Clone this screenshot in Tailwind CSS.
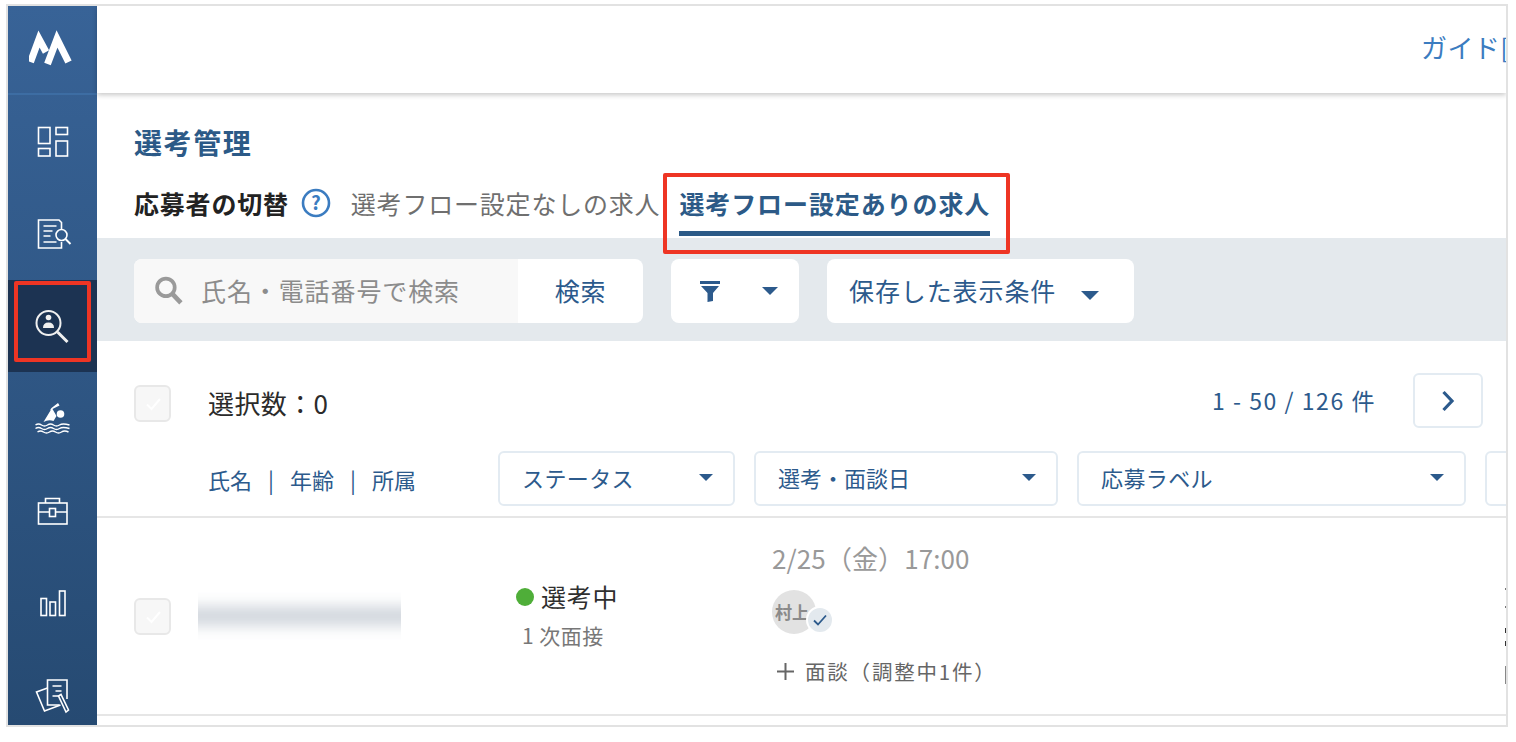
<!DOCTYPE html>
<html lang="ja">
<head>
    <meta charset="UTF-8">
    <meta name="viewport" content="width=device-width, initial-scale=1.0">
    <title>選考管理</title>
    <script src="https://cdn.jsdelivr.net/npm/@tailwindcss/browser@4"></script>
</head>
<body class="bg-white h-[742px] overflow-hidden font-['Noto_Sans_CJK_JP','Noto_Sans',sans-serif]">
    <!-- Frame -->
    <div class="relative ml-[6px] mt-[4px] w-[1502px] h-[723px] border-2 border-[#e2e2e2] overflow-hidden flex">

        <!-- Sidebar -->
        <aside class="w-[89px] shrink-0 h-full flex flex-col bg-gradient-to-b from-[#386397] to-[#264a72] overflow-hidden">
            <div class="h-[89px] shrink-0 flex items-center justify-center border-b-2 border-[#3d6da3]">
                <svg width="48" height="40" viewBox="28.5 29 48 40" fill="none" stroke="white" stroke-width="7">
                    <path d="M30 61 L38.5 38 L45.5 51"/>
                    <path d="M47 63 L56.5 38 L68 61"/>
                </svg>
            </div>
            <div class="h-[92.5px] shrink-0 flex items-center justify-center">
                <svg width="40" height="40" viewBox="32.5 121 40 40" fill="none" stroke="white" stroke-width="1.6">
                    <rect x="38" y="127.5" width="11.5" height="16"/>
                    <rect x="38" y="148.5" width="11.5" height="7.5"/>
                    <rect x="55.5" y="127.5" width="11.5" height="7"/>
                    <rect x="55.5" y="141" width="11.5" height="15"/>
                </svg>
            </div>
            <div class="h-[92.5px] shrink-0 flex items-center justify-center">
                <svg width="40" height="40" viewBox="32.5 214 40 40" fill="none" stroke="white" stroke-width="1.6">
                    <path d="M61 229 V222.5 L58.5 220 H38 V248 H61 V242"/>
                    <path d="M43 226 H56 M43 231 H52 M43 236 H50 M43 242 H56"/>
                    <circle cx="61" cy="235" r="5.5"/>
                    <path d="M65 239 L70 244" stroke-width="2"/>
                </svg>
            </div>
            <div class="h-[92px] shrink-0 flex items-center justify-center bg-[#1c3352]">
                <svg width="44" height="44" viewBox="30.5 304 44 44" fill="none" stroke="#f0f0f0" stroke-width="2">
                    <circle cx="48" cy="323" r="12"/>
                    <path d="M57 332 L67 342" stroke-width="3"/>
                    <circle cx="48" cy="317.5" r="2.8" fill="#f0f0f0" stroke="none"/>
                    <path d="M42.5 328 Q42.5 322.5 48 322.5 Q53.5 322.5 53.5 328 Z" fill="#f0f0f0" stroke="none"/>
                </svg>
            </div>
            <div class="h-[92.5px] shrink-0 flex items-center justify-center">
                <svg width="40" height="40" viewBox="32.5 400 40 40" fill="none" stroke="white" stroke-width="1.5">
                    <circle cx="60" cy="416" r="3.8" fill="white" stroke="none"/>
                    <path d="M57.5 405 L59 407.5 L52 411 L56 418 L53 423 Q48 421 43 424 L50 412.5 Q49.5 411 51 410 Z" fill="white" stroke="none"/>
                    <path d="M35 427 Q38 425 41 427 T47 427 T53 427 T59 427 T69 427"/>
                    <path d="M35 430.5 Q38 428.5 41 430.5 T47 430.5 T53 430.5 T59 430.5 T69 430.5"/>
                    <path d="M37 434 Q40 432 43 434 T49 434 T55 434 T61 434 T68 434"/>
                </svg>
            </div>
            <div class="h-[92.5px] shrink-0 flex items-center justify-center">
                <svg width="40" height="40" viewBox="32.5 491 40 40" fill="none" stroke="white" stroke-width="1.6">
                    <rect x="38" y="503" width="28.5" height="21"/>
                    <path d="M45 503 V498.5 H59 V503"/>
                    <path d="M38 512 H49 M55 512 H66.5"/>
                    <rect x="49" y="508.5" width="6" height="8"/>
                </svg>
            </div>
            <div class="h-[92.5px] shrink-0 flex items-center justify-center">
                <svg width="40" height="40" viewBox="32.5 584 40 40" fill="none" stroke="white" stroke-width="1.6">
                    <rect x="40.5" y="599.5" width="5.5" height="17"/>
                    <rect x="49.5" y="603" width="5.5" height="13.5"/>
                    <rect x="59" y="592" width="5.5" height="24.5"/>
                </svg>
            </div>
            <div class="h-[92.5px] shrink-0 flex items-start justify-center pt-[26px]">
                <svg width="40" height="40" viewBox="32.5 677 40 40" fill="none" stroke="white" stroke-width="1.6">
                    <path d="M47 689 L36 693 L44 712 L60 706"/>
                    <path d="M59 706 H47 V681 H66.5 V700"/>
                    <path d="M52 687 H61 M55 692 H61 M52 697 H58"/>
                    <path d="M58 697 L60.5 695.5 L68 711 L65.5 713 Z"/>
                </svg>
            </div>
        </aside>

        <!-- Main -->
        <main class="flex-1 min-w-0 flex flex-col">
            <header class="h-[87px] shrink-0 bg-white shadow-[0_2px_5px_rgba(0,0,0,0.22)] flex items-center pl-[1324px] pb-[6px] whitespace-nowrap overflow-hidden relative z-10">
                <span class="text-[26px] tracking-[0.4px] text-[#3b7cc0]">ガイド[</span>
            </header>

            <section class="pl-[37px] pt-[29px] h-[145px] shrink-0 flex flex-col">
                <h1 class="text-[28px] leading-[40px] font-bold tracking-[1.6px] text-[#2c5a87]">選考管理</h1>
                <div class="flex items-start mt-[23px]">
                    <span class="text-[25px] leading-[36px] font-bold tracking-[0.8px] text-[#222]">応募者の切替</span>
                    <svg class="ml-[12px] mt-[3px]" width="30" height="30" viewBox="0 0 30 30" fill="none">
                        <circle cx="15" cy="15" r="13" stroke="#3b7cc0" stroke-width="2.6"/>
                        <text x="15" y="22" text-anchor="middle" font-size="19" font-weight="700" fill="#3b7cc0">?</text>
                    </svg>
                    <span class="ml-[20px] text-[25px] leading-[36px] tracking-[0.8px] text-[#6f6f6f] whitespace-nowrap">選考フロー設定なしの求人</span>
                    <div class="ml-[19px] h-[51px] border-b-[5px] border-[#2c5a87] w-[311px] shrink-0">
                        <span class="block text-[25px] leading-[36px] font-bold tracking-[0.9px] text-[#2c5a87] whitespace-nowrap">選考フロー設定ありの求人</span>
                    </div>
                </div>
            </section>

            <!-- Filter band -->
            <section class="h-[103px] shrink-0 bg-[#e4e9ed] pl-[37px] pt-[21px] flex items-start text-[#2c5a8c]">
                <div class="w-[509px] h-[64px] flex rounded-lg overflow-hidden bg-white">
                    <div class="w-[384px] bg-[#f8f8f8] flex items-center pl-[19px]">
                        <svg class="shrink-0 mb-[2px]" width="31" height="31" viewBox="0 0 30 30" fill="none" stroke="#9a9a9a">
                            <circle cx="12.5" cy="12" r="8.5" stroke-width="3.6"/>
                            <path d="M19 18.5 L27 27" stroke-width="4.5"/>
                        </svg>
                        <span class="ml-[17px] text-[25px] tracking-[0.9px] text-[#8c8c8c] whitespace-nowrap">氏名・電話番号で検索</span>
                    </div>
                    <span class="flex-1 flex items-center justify-center text-[25px] tracking-[0.8px]">検索</span>
                </div>
                <div class="ml-[28px] w-[128px] h-[64px] rounded-lg bg-white flex items-center pl-[29px]">
                    <svg width="20" height="21" viewBox="0 0 20 21" fill="#2c5a8c">
                        <path d="M0 0 H20 V3 H0 Z M1 5 H19 L13 12 V20 L7.5 21 V12 Z"/>
                    </svg>
                    <span class="ml-[42px] w-0 h-0 border-x-[8px] border-x-transparent border-t-[8px] border-t-[#2c5a8c]"></span>
                </div>
                <div class="ml-[28px] w-[307px] h-[64px] rounded-lg bg-white flex items-center pl-[22px]">
                    <span class="text-[25px] tracking-[0.9px] whitespace-nowrap">保存した表示条件</span>
                    <span class="ml-[25px] mt-[8px] w-0 h-0 border-x-[9px] border-x-transparent border-t-[9px] border-t-[#2c5a8c]"></span>
                </div>
            </section>

            <!-- List head -->
            <section class="h-[177px] shrink-0 border-b-2 border-[#e6e6e6] pl-[37px] pt-[32px] text-[#2c5a8c]">
                <div class="flex items-center h-[55px] pr-[23px]">
                    <span class="mt-[6px] w-[37px] h-[37px] shrink-0 rounded-md border-2 border-[#e8e8e8] bg-[#f7f7f7] flex items-center justify-center">
                        <svg width="22" height="22" viewBox="0 0 22 22" fill="none" stroke="white" stroke-width="2"><path d="M5 11.5 L9.5 16 L18 6"/></svg>
                    </span>
                    <span class="ml-[37px] mt-[4px] text-[26px] tracking-[0.4px] text-[#2b2b2b] whitespace-nowrap">選択数：0</span>
                    <span class="ml-auto text-[23px] tracking-[1.55px] whitespace-nowrap">1 - 50 / 126 件</span>
                    <span class="ml-[37px] w-[70px] h-[55px] rounded-md border-2 border-[#e3ebf2] flex items-center justify-center">
                        <svg width="16" height="24" viewBox="0 0 16 24" fill="none" stroke="#2c5a8c" stroke-width="3.2"><path d="M3.5 3 L12 12 L3.5 21"/></svg>
                    </span>
                </div>
                <div class="flex items-start mt-[23px] whitespace-nowrap">
                    <div class="ml-[74px] w-[290px] shrink-0 pt-[10px] flex text-[22px] leading-[36px]">
                        <span>氏名</span><span class="mx-[16px]">|</span><span>年齢</span><span class="mx-[16px]">|</span><span>所属</span>
                    </div>
                    <div class="w-[237px] h-[55px] pb-[3px] shrink-0 rounded-md border-2 border-[#e3ebf2] flex items-center justify-between pl-[22px] pr-[20px] text-[22px] tracking-[0.4px]">
                        <span>ステータス</span><span class="w-0 h-0 border-x-[7px] border-x-transparent border-t-[7px] border-t-[#2c5a8c]"></span>
                    </div>
                    <div class="ml-[19px] w-[304px] h-[55px] pb-[3px] shrink-0 rounded-md border-2 border-[#e3ebf2] flex items-center justify-between pl-[22px] pr-[20px] text-[22px]">
                        <span>選考・面談日</span><span class="w-0 h-0 border-x-[7px] border-x-transparent border-t-[7px] border-t-[#2c5a8c]"></span>
                    </div>
                    <div class="ml-[19px] w-[389px] h-[55px] pb-[3px] shrink-0 rounded-md border-2 border-[#e3ebf2] flex items-center justify-between pl-[22px] pr-[20px] text-[22px] tracking-[0.4px]">
                        <span>応募ラベル</span><span class="w-0 h-0 border-x-[7px] border-x-transparent border-t-[7px] border-t-[#2c5a8c]"></span>
                    </div>
                    <div class="ml-[19px] w-[60px] h-[55px] shrink-0 rounded-md border-2 border-[#e3ebf2]"></div>
                </div>
            </section>

            <!-- Row -->
            <section class="h-[198px] shrink-0 border-b-2 border-[#e6e6e6] pl-[37px] flex items-start whitespace-nowrap overflow-hidden">
                <span class="mt-[80px] w-[37px] h-[37px] shrink-0 rounded-md border-2 border-[#e8e8e8] bg-[#f7f7f7] flex items-center justify-center">
                    <svg width="22" height="22" viewBox="0 0 22 22" fill="none" stroke="white" stroke-width="2"><path d="M5 11.5 L9.5 16 L18 6"/></svg>
                </span>
                <div class="ml-[27px] mt-[74px] w-[203px] h-[48px] shrink-0 overflow-hidden flex items-center">
                    <div class="ml-[-20px] w-[243px] h-[20px] shrink-0 bg-[#d2d7de] blur-[7px]"></div>
                </div>
                <div class="ml-[115px] w-[256px] shrink-0 pt-[60px]">
                    <div class="flex items-center h-[38px]">
                        <span class="w-[18px] h-[18px] rounded-full bg-[#4fae39]"></span>
                        <span class="ml-[7px] text-[25px] tracking-[0.8px] text-[#2f2f2f]">選考中</span>
                    </div>
                    <div class="ml-[6px] mt-[3px] text-[21px] leading-[32px] tracking-[0.5px] text-[#777]">1 次面接</div>
                </div>
                <div class="w-[230px] shrink-0 pt-[22px]">
                    <div class="text-[26px] leading-[36px] tracking-[0.1px] text-[#999]">2/25（金）17:00</div>
                    <div class="relative mt-[14px] w-[44px] h-[44px] rounded-full bg-[#e2e2e2] flex items-center pl-[3px] overflow-visible">
                        <span class="text-[17px] font-bold text-[#8a8a8a]">村上</span>
                        <span class="absolute left-[34px] top-[16px] w-[28px] h-[28px] rounded-full bg-[#e3e9ee] border-2 border-white flex items-center justify-center">
                            <svg width="18" height="18" viewBox="0 0 18 18" fill="none" stroke="#2c5a8c" stroke-width="1.8"><path d="M3 9.5 L7 13.5 L15 4.5"/></svg>
                        </span>
                    </div>
                    <div class="mt-[19px] flex items-center text-[20.5px] leading-[36px] tracking-[1.8px] text-[#666]">
                        <svg class="ml-[5px] shrink-0" width="17" height="17" viewBox="0 0 17 17" fill="none" stroke="#666" stroke-width="2"><path d="M8.5 0 V17 M0 8.5 H17"/></svg>
                        <span class="ml-[11px]">面談（調整中1件）</span>
                    </div>
                </div>
                <!-- cut off by the window edge -->
                <div class="ml-[503px] pt-[70px] flex flex-col items-start">
                    <span class="w-[2px] h-[2px] bg-[#777]"></span>
                    <span class="mt-[16px] w-[2px] h-[2px] bg-[#777]"></span>
                    <span class="mt-[20px] w-[3px] h-[5px] bg-[#333]"></span>
                    <span class="mt-[8px] w-[3px] h-[5px] bg-[#333]"></span>
                    <span class="mt-[20px] w-[2px] h-[18px] bg-[#888]"></span>
                </div>
            </section>
        </main>

        <!-- Red highlights -->
        <div class="absolute left-[6px] top-[275px] w-[77px] h-[81px] border-4 border-[#ee3524] rounded-[2px]"></div>
        <div class="absolute left-[655px] top-[167px] w-[347px] h-[81px] border-4 border-[#ee3524] rounded-[2px]"></div>
    </div>
</body>
</html>
